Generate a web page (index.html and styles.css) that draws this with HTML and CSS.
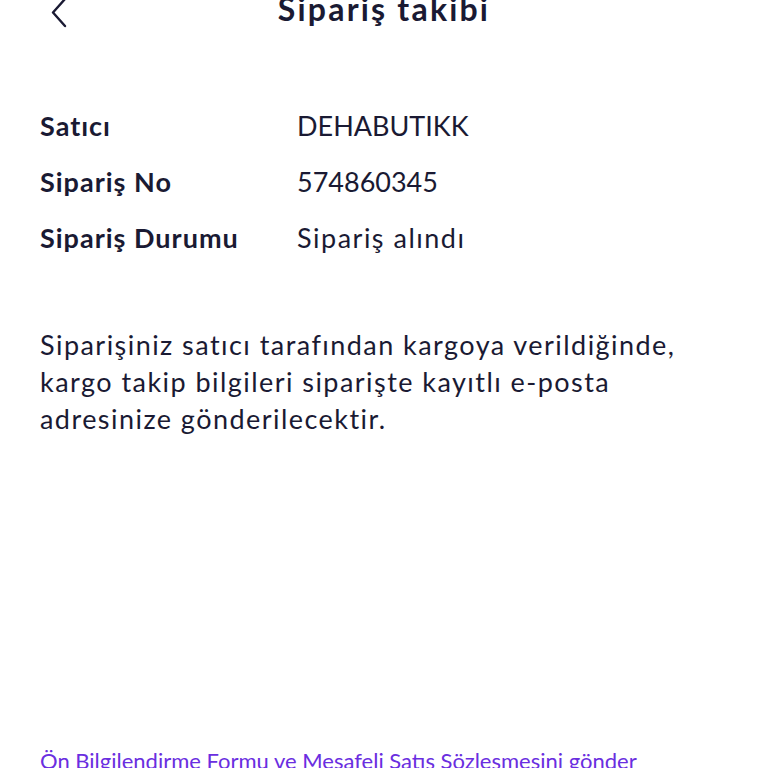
FILE: index.html
```html
<!DOCTYPE html>
<html lang="tr">
  <head>
    <meta charset="UTF-8" />
    <meta name="viewport" content="width=device-width, initial-scale=1.0" />
    <title>Sipariş takibi</title>
    <link rel="stylesheet" href="styles.css">
  </head>
  <body>
    <!-- Üst başlık -->
    <header class="top-bar">
      <a class="back-btn" href="#">
        <svg width="24" height="36" viewBox="0 0 24 36">
          <path d="M15 -1 L3 12.5 L15 26" fill="none" stroke="#1a1a33" stroke-width="2.4" stroke-linecap="round" stroke-linejoin="round" />
        </svg>
      </a>
      <h1 class="page-title">Sipariş takibi</h1>
    </header>

    <!-- Sipariş bilgileri -->
    <div class="order-info">
      <div class="info-label">Satıcı</div>
      <div class="info-value caps">DEHABUTIKK</div>
      <div class="info-label">Sipariş No</div>
      <div class="info-value caps">574860345</div>
      <div class="info-label">Sipariş Durumu</div>
      <div class="info-value">Sipariş alındı</div>
    </div>

    <p class="info-text">
      Siparişiniz satıcı tarafından kargoya verildiğinde,<br />
      kargo takip bilgileri siparişte kayıtlı e-posta<br />
      adresinize gönderilecektir.
    </p>

    <a class="send-link" href="#">Ön Bilgilendirme Formu ve Mesafeli Satış Sözleşmesini gönder</a>
  </body>
</html>
```
FILE: styles.css
```css
/* Genel */
body {
  margin: 0;
  padding: 0 40px;
  font-family: Lato, "Open Sans", sans-serif;
  color: #1a1a33;
  background: #fff;
  overflow: hidden;
}

/* Başlık çubuğu */
.top-bar {
  position: relative;
  height: 36px;
  margin-top: -9px;
  display: flex;
  justify-content: center;
  align-items: center;
}

.back-btn {
  position: absolute;
  left: 10px;
  top: 9px;
  display: block;
  line-height: 0;
}

.page-title {
  margin: 0;
  font-size: 32px;
  line-height: 36px;
  font-weight: 700;
  letter-spacing: 2.2px;
}

/* Bilgi tablosu */
.order-info {
  display: grid;
  grid-template-columns: 257px auto;
  grid-auto-rows: 56px;
  align-items: center;
  margin-top: 70px;
  font-size: 27px;
}

.info-label {
  font-weight: 700;
  letter-spacing: 1px;
}

.info-value {
  font-weight: 400;
  letter-spacing: 1.5px;
}

.info-value.caps {
  letter-spacing: 0;
}

/* Açıklama metni */
.info-text {
  margin: 61px 0 0;
  font-size: 27px;
  line-height: 37px;
  letter-spacing: 1.45px;
}

.send-link {
  display: block;
  margin-top: 310px;
  font-size: 22px;
  color: #6a2ee0;
  text-decoration: none;
}
```
